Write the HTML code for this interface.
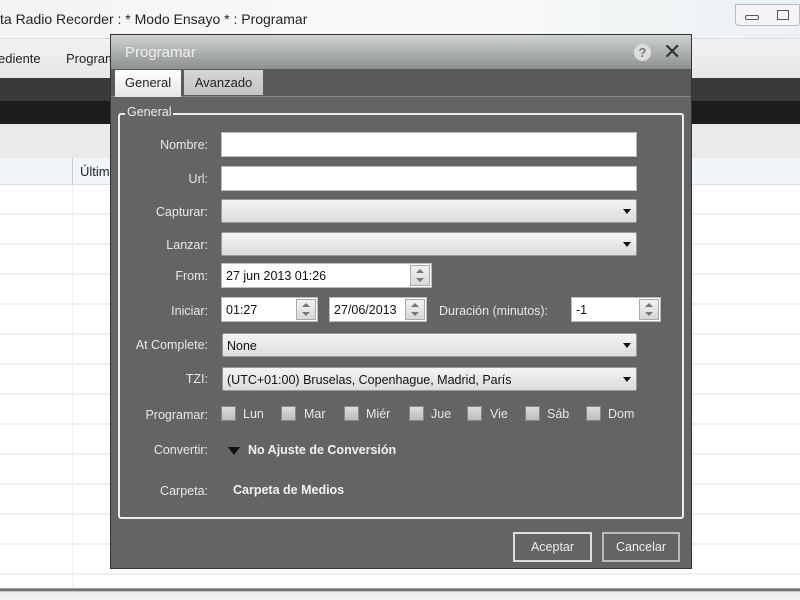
<!DOCTYPE html>
<html><head><meta charset="utf-8"><style>
*{box-sizing:border-box;margin:0;padding:0}
body{width:800px;height:600px;overflow:hidden;position:relative;background:#fff;font-family:"Liberation Sans",sans-serif;font-size:13px}
.a{position:absolute}
.lbl{position:absolute;right:592px;color:#e8e8e8;font-size:12.5px;text-align:right;white-space:nowrap}
.inp{position:absolute;background:#fff;border:1px solid #bbb;height:25px;font-size:12.5px;padding:5px 4px;color:#111}
.cmb{position:absolute;background:linear-gradient(#f4f4f4,#dcdcdc);border:1px solid #999;border-radius:2px;height:24px;font-size:12.5px;padding:5px 4px;color:#111}
.cmb:after{content:"";position:absolute;right:5px;top:9px;border-left:4px solid transparent;border-right:4px solid transparent;border-top:5px solid #111}
.spin{position:absolute;right:1px;top:1px;width:20px;height:21px;background:linear-gradient(#f2f2f2,#d8d8d8);border:1px solid #aaa}
.spin:before{content:"";position:absolute;left:5px;top:3px;border-left:4px solid transparent;border-right:4px solid transparent;border-bottom:4px solid #777}
.spin:after{content:"";position:absolute;left:5px;bottom:3px;border-left:4px solid transparent;border-right:4px solid transparent;border-top:4px solid #777}
.cb{position:absolute;top:406px;width:15px;height:15px;background:linear-gradient(#ddd,#bbb);border:1px solid #888}
.cbl{position:absolute;top:407px;color:#e8e8e8;font-size:12.5px}
.btn{position:absolute;top:532px;height:30px;border:2px solid #ddd;color:#eee;font-size:12.5px;text-align:center;line-height:26px}
</style></head><body>
<div class="a" style="left:0;top:185px;width:800px;height:403px;background:repeating-linear-gradient(#fff 0 28px,#eef0f0 28px 30px)"></div>
<div class="a" style="left:72px;top:185px;width:1px;height:403px;background:#eef0f0"></div>
<div class="a" style="left:0;top:0;width:800px;height:38px;background:linear-gradient(90deg,#f4f4f4,#fafafa 60%,#e9f1f3)"></div>
<div class="a" style="left:0;top:11px;font-size:14px;color:#222">ta Radio Recorder : * Modo Ensayo * : Programar</div>
<div class="a" style="left:735px;top:4px;width:65px;height:22px;border:1px solid #bbb;border-radius:0 0 4px 4px;background:#f5f5f5"></div>
<div class="a" style="left:745px;top:15px;width:14px;height:5px;border:1px solid #555;border-radius:2px"></div>
<div class="a" style="left:777px;top:10px;width:12px;height:10px;border:1px solid #555"></div>
<div class="a" style="left:0;top:38px;width:800px;height:40px;background:linear-gradient(#f2f2f2,#e6e6e6);border-top:1px solid #ddd"></div>
<div class="a" style="left:-2px;top:51px;font-size:13px;color:#222">ediente</div>
<div class="a" style="left:66px;top:51px;font-size:13px;color:#222">Program</div>
<div class="a" style="left:0;top:78px;width:800px;height:23px;background:#3a3a3a"></div>
<div class="a" style="left:0;top:101px;width:800px;height:23px;background:#1c1c1c"></div>
<div class="a" style="left:0;top:124px;width:800px;height:34px;background:#eaeaea"></div>
<div class="a" style="left:0;top:158px;width:800px;height:27px;background:#f3f6f8;border-bottom:1px solid #ddd"></div>
<div class="a" style="left:72px;top:158px;width:1px;height:27px;background:#ccc"></div>
<div class="a" style="left:80px;top:164px;font-size:13px;color:#222">Últim</div>
<div class="a" style="left:0;top:588px;width:800px;height:12px;background:linear-gradient(#bbb,#555 2px,#eaeaea 4px,#f2f5f5)"></div>

<div class="a" style="left:110px;top:34px;width:582px;height:535px;background:#646464;border:1px solid #333"></div>
<div class="a" style="left:111px;top:35px;width:580px;height:34px;background:linear-gradient(#cfd2d2,#8d9091)"></div>
<div class="a" style="left:125px;top:44px;font-size:15px;color:#eee">Programar</div>
<div class="a" style="left:634px;top:44px;width:17px;height:17px;border-radius:50%;background:#ddd;color:#777;font-size:13px;font-weight:bold;text-align:center;line-height:17px">?</div>
<div class="a" style="left:663px;top:39px;font-size:22px;color:#333">✕</div>
<div class="a" style="left:111px;top:69px;width:580px;height:28px;background:#5a5a5a;border-bottom:1px solid #888"></div>
<div class="a" style="left:115px;top:70px;width:66px;height:27px;background:linear-gradient(#fff,#e6e6e6);color:#222;font-size:13px;text-align:center;line-height:26px">General</div>
<div class="a" style="left:184px;top:70px;width:79px;height:25px;background:linear-gradient(#d6d6d6,#c4c4c4);color:#222;font-size:13px;text-align:center;line-height:25px">Avanzado</div>
<div class="a" style="left:118px;top:113px;width:566px;height:406px;border:2px solid #eee;border-radius:3px"></div>
<div class="a" style="left:125px;top:105px;background:#646464;padding:0 2px;color:#eee;font-size:12.5px">General</div>

<div class="lbl" style="top:138px">Nombre:</div><div class="inp" style="left:221px;top:132px;width:416px"></div>
<div class="lbl" style="top:172px">Url:</div><div class="inp" style="left:221px;top:166px;width:416px"></div>
<div class="lbl" style="top:205px">Capturar:</div><div class="cmb" style="left:221px;top:199px;width:416px"></div>
<div class="lbl" style="top:238px">Lanzar:</div><div class="cmb" style="left:221px;top:232px;width:416px"></div>
<div class="lbl" style="top:269px">From:</div><div class="inp" style="left:221px;top:263px;width:211px">27 jun  2013 01:26<div class="spin"></div></div>
<div class="lbl" style="top:304px">Iniciar:</div><div class="inp" style="left:221px;top:297px;width:97px">01:27<div class="spin"></div></div>
<div class="inp" style="left:329px;top:297px;width:98px">27/06/2013<div class="spin"></div></div>
<div class="a" style="left:439px;top:304px;color:#e8e8e8;font-size:12.5px">Duración (minutos):</div>
<div class="inp" style="left:571px;top:297px;width:90px">-1<div class="spin"></div></div>
<div class="lbl" style="top:338px">At Complete:</div><div class="cmb" style="left:222px;top:333px;width:415px">None</div>
<div class="lbl" style="top:372px">TZI:</div><div class="cmb" style="left:222px;top:367px;width:415px">(UTC+01:00) Bruselas, Copenhague, Madrid, París</div>
<div class="lbl" style="top:408px">Programar:</div>
<div class="cb" style="left:221px"></div><div class="cbl" style="left:243px">Lun</div>
<div class="cb" style="left:281px"></div><div class="cbl" style="left:304px">Mar</div>
<div class="cb" style="left:344px"></div><div class="cbl" style="left:366px">Miér</div>
<div class="cb" style="left:409px"></div><div class="cbl" style="left:431px">Jue</div>
<div class="cb" style="left:467px"></div><div class="cbl" style="left:490px">Vie</div>
<div class="cb" style="left:525px"></div><div class="cbl" style="left:547px">Sáb</div>
<div class="cb" style="left:586px"></div><div class="cbl" style="left:608px">Dom</div>
<div class="lbl" style="top:443px">Convertir:</div>
<div class="a" style="left:228px;top:447px;border-left:6px solid transparent;border-right:6px solid transparent;border-top:8px solid #111"></div>
<div class="a" style="left:248px;top:443px;color:#f2f2f2;font-size:12.5px;font-weight:bold">No Ajuste de Conversión</div>
<div class="lbl" style="top:484px">Carpeta:</div>
<div class="a" style="left:233px;top:483px;color:#f2f2f2;font-size:12.5px;font-weight:bold">Carpeta de Medios</div>
<div class="btn" style="left:513px;width:79px">Aceptar</div>
<div class="btn" style="left:602px;width:78px;border-color:#bbb">Cancelar</div>
</body></html>
